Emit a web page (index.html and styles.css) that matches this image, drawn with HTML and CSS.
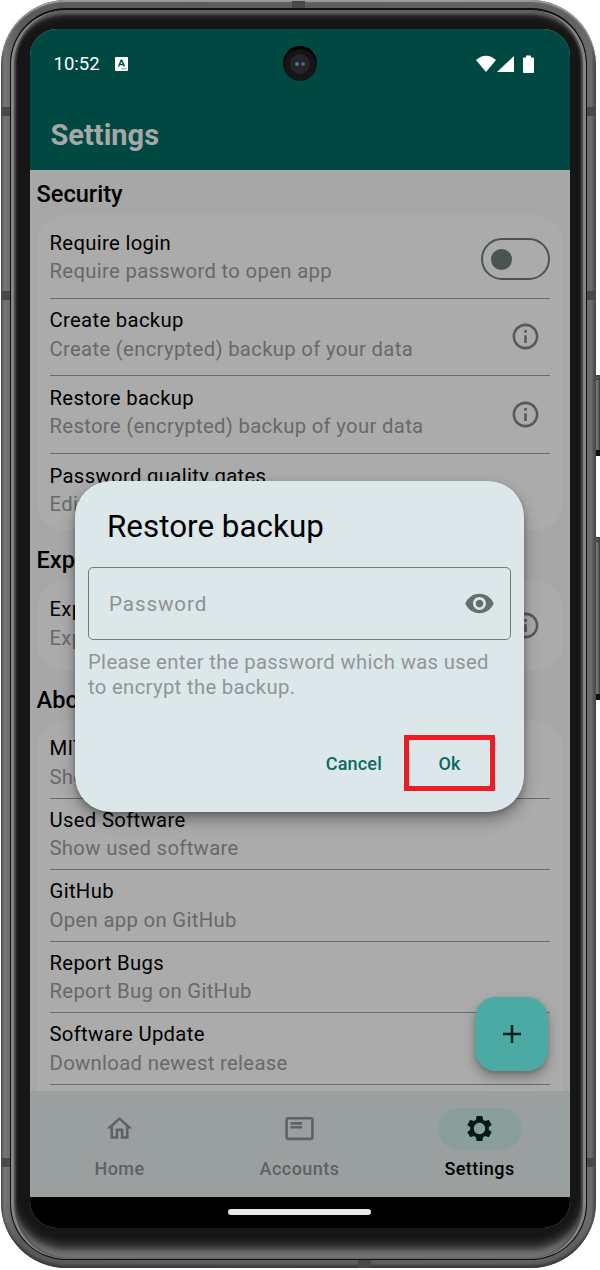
FILE: index.html
```html
<!DOCTYPE html>
<html lang="en">
<head>
<meta charset="utf-8">
<title>Settings</title>
<link rel="stylesheet" href="styles.css">
</head>
<body>
<svg class="defs" width="0" height="0" aria-hidden="true">
  <symbol id="info" viewBox="0 0 24 24"><path d="M11 7h2v2h-2zm0 4h2v6h-2zm1-9C6.48 2 2 6.48 2 12s4.48 10 10 10 10-4.48 10-10S17.52 2 12 2zm0 18c-4.41 0-8-3.59-8-8s3.59-8 8-8 8 3.59 8 8-3.59 8-8 8z"/></symbol>
</svg>
<div class="device">
  <i class="key key-power"></i>
  <i class="key key-volume"></i>
  <div class="metal">
    <i class="band band-left band-a"></i><i class="band band-left band-b"></i><i class="band band-left band-c"></i>
    <i class="band band-right band-a"></i><i class="band band-right band-b"></i><i class="band band-right band-c"></i>
    <i class="band band-top"></i><i class="band band-bottom"></i>
    <div class="bezel">
      <div class="screen">
        <header class="appbar">
          <div class="status">
            <span class="clock">10:52</span>
            <svg class="notif" viewBox="0 0 13 14"><rect width="13" height="14" rx="1" fill="#fff"/><path d="M3.6 9.4 6.2 3.2h.6l2.6 6.2M4.7 7.5h3.6" fill="none" stroke="#004943" stroke-width="1.4"/><path d="M6.5 11.8h1m1 0h1m1 0h1" stroke="#004943"/></svg>
            <span class="spacer"></span>
            <svg class="signals" viewBox="0 0 58 18"><path d="M0 5Q10-3.500 20 5L10 17zM21 17 38 1V17zM47 3.500Q47 2.500 48 2.500H50V.500H55V2.500H57Q58 2.500 58 3.500V17Q58 18 57 18H48Q47 18 47 17z" fill="#fff"/></svg>
          </div>
          <h1 class="title">Settings</h1>
        </header>
        <main class="content">
          <h2 class="section">Security</h2>
          <section class="card card-security">
            <div class="row"><div class="text"><b>Require login</b><span>Require password to open app</span></div><div class="switch"><i></i></div></div>
            <div class="row"><div class="text"><b>Create backup</b><span>Create (encrypted) backup of your data</span></div><svg class="info"><use href="#info"/></svg></div>
            <div class="row"><div class="text"><b>Restore backup</b><span>Restore (encrypted) backup of your data</span></div><svg class="info"><use href="#info"/></svg></div>
            <div class="row"><div class="text"><b>Password quality gates</b><span>Edit</span></div></div>
          </section>
          <h2 class="section">Export</h2>
          <section class="card card-export">
            <div class="row"><div class="text"><b>Export</b><span>Export</span></div><svg class="info"><use href="#info"/></svg></div>
          </section>
          <h2 class="section">About</h2>
          <section class="card card-about">
            <div class="row"><div class="text"><b>MIT</b><span>Show</span></div></div>
            <div class="row"><div class="text"><b>Used Software</b><span>Show used software</span></div></div>
            <div class="row"><div class="text"><b>GitHub</b><span>Open app on GitHub</span></div></div>
            <div class="row"><div class="text"><b>Report Bugs</b><span>Report Bug on GitHub</span></div></div>
            <div class="row"><div class="text"><b>Software Update</b><span>Download newest release</span></div></div>
          </section>
        </main>
        <nav class="nav">
          <div class="tab"><div class="pill"><svg viewBox="0 0 24 24"><path d="M12 5.690l5 4.500V18h-2v-6H9v6H7v-7.810l5-4.500M12 3L2 12h3v8h6v-6h2v6h6v-8h3L12 3z"/></svg></div><span>Home</span></div>
          <div class="tab"><div class="pill"><svg viewBox="0 0 24 24"><path d="M21 3H3c-1.100 0-2 .9-2 2v14c0 1.100.9 2 2 2h18c1.100 0 2-.9 2-2V5c0-1.100-.9-2-2-2zm0 16H3V5h18zM5 10h9v2H5zM5 7h9v2H5z"/></svg></div><span>Accounts</span></div>
          <div class="tab active"><div class="pill"><svg viewBox="0 0 24 24"><path d="M19.140 12.940c.04-.3.060-.61.060-.94 0-.32-.02-.64-.07-.94l2.030-1.580c.18-.14.230-.41.120-.61l-1.920-3.320c-.12-.22-.37-.29-.59-.22l-2.390.96c-.5-.38-1.030-.7-1.620-.94l-.36-2.540c-.04-.24-.24-.41-.48-.41h-3.840c-.24 0-.43.170-.47.410l-.36 2.540c-.59.240-1.130.570-1.620.940l-2.390-.96c-.22-.08-.47 0-.59.220L2.740 8.870c-.12.210-.08.470.120.610l2.030 1.580c-.05.3-.09.630-.09.940s.02.640.070.940l-2.030 1.580c-.18.140-.23.410-.12.610l1.920 3.320c.12.220.37.290.59.220l2.390-.96c.5.380 1.030.7 1.620.940l.36 2.540c.05.240.24.410.48.410h3.840c.24 0 .44-.17.470-.41l.36-2.540c.59-.24 1.130-.56 1.620-.94l2.390.96c.22.080.47 0 .59-.22l1.920-3.320c.12-.22.070-.47-.12-.61l-2.010-1.580zM12 16.400c-2.430 0-4.400-1.970-4.400-4.400s1.970-4.400 4.400-4.400 4.400 1.970 4.400 4.400-1.970 4.400-4.400 4.400z"/></svg></div><span>Settings</span></div>
        </nav>
        <div class="gesture"><i></i></div>

        <div class="camera"><i></i></div>
        <div class="fab"><svg viewBox="0 0 20 20"><path d="M10 1v18M1 10h18" stroke="#00201d" stroke-width="2.500"/></svg></div>
        <div class="dialog">
          <h3>Restore backup</h3>
          <div class="field"><span>Password</span><svg viewBox="0 0 24 24"><path d="M12 4.500C7 4.500 2.730 7.610 1 12c1.730 4.390 6 7.500 11 7.500s9.270-3.110 11-7.500c-1.730-4.390-6-7.500-11-7.500zM12 17c-2.760 0-5-2.240-5-5s2.240-5 5-5 5 2.240 5 5-2.240 5-5 5zm0-8c-1.660 0-3 1.340-3 3s1.340 3 3 3 3-1.340 3-3-1.340-3-3-3z"/></svg></div>
          <p>Please enter the password which was used<br>to encrypt the backup.</p>
          <div class="actions"><span class="cancel">Cancel</span><span class="ok">Ok</span></div>
        </div>
      </div>
    </div>
  </div>
</div>
</body>
</html>
```

FILE: styles.css
```css
* { box-sizing: border-box; }
body { margin: 0; background: #fff; font-family: Roboto, sans-serif; color: #000; }
h1, h2, h3, p { margin: 0; }
.defs { display: block; }

/* phone hardware */
.device { position: relative; width: 600px; height: 1270px; padding: 0 4px 2px 1px; }
.key { position: absolute; right: 0; width: 6px; background: linear-gradient(90deg, #888, #6a6a6a 70%, #333); border-top: 5px double #444; border-bottom: 6px solid #111; }
.key-power { top: 375px; height: 81px; }
.key-volume { top: 537px; height: 163px; }
.metal {
  position: relative; height: 1268px; padding: 8px 9px 8px 9px; border-radius: 65px;
  background: linear-gradient(90deg, #4c4c4c, #777 3px, #6c6c6c 8px, #5a5a5a 20px, #626262 575px, #6d6d6d 590px, #454545);
  box-shadow: inset 0 2px 1px #9a9d9a, inset 0 -3px 3px #3a3a3a;
}
.bezel {
  position: relative; height: 1252px; padding: 19px 15.500px 31px 18.500px;
  border: 1px solid #111; border-top-width: 2px; border-radius: 56px;
  background: #161616;
  box-shadow: inset 3px 0 1px #858585, inset -3px 0 1px #858585, inset 5px 0 2px #4a4a4a, inset -5px 0 2px #4a4a4a, inset 0 4px 3px #666, inset 0 7px 5px #333, inset 0 -8px 5px #737373, inset 0 -14px 9px #4c4c4c;
}
.band { position: absolute; width: 9px; height: 9px; background: #484a4a; }
.band-left { left: 0; }
.band-right { right: 0; }
.band-a { top: 107px; }
.band-b { top: 291px; }
.band-c { top: 1158px; }
.band-top { top: 1px; left: 291px; width: 13px; height: 7px; }
.band-bottom { bottom: 0; left: 357px; width: 13px; height: 8px; }

.screen { position: relative; height: 1199px; width: 540px; border-radius: 27px; overflow: hidden; background: #a7a7a7; display: flex; flex-direction: column; }

/* app bar */
.appbar { height: 141px; flex: none; background: #004943; padding: 21px 36px 0 24px; }
.status { display: flex; align-items: center; height: 28px; color: #fff; }
.clock { font-size: 18.500px; }
.notif { width: 13px; height: 14px; margin-left: 15px; }
.spacer { flex: 1; }
.signals { width: 58px; height: 18px; }
.title { margin: 40px 0 0 -3px; font-size: 29px; line-height: 34px; font-weight: 700; color: #a7a7a7; }

/* settings list */
.content { height: 921px; flex: none; overflow: hidden; padding: 0 7px; }
.section { height: 45px; padding-top: 9px; font-size: 23.600px; line-height: 30px; font-weight: 500; }
.card { background: #ababab; border-radius: 27px; padding: 6px 13px 0; }
.card-security { height: 315px; }
.card-export { height: 89px; }
.section:nth-of-type(2) { height: 51px; padding-top: 15px; }
.section:nth-of-type(3) { height: 51px; padding-top: 15px; }
.row { display: flex; align-items: center; justify-content: space-between; height: 77.500px; border-bottom: 1.300px solid #6b6b6b; }
.row:last-child { border-bottom: 0; }
.text { display: flex; flex-direction: column; white-space: nowrap; font-size: 20.300px; line-height: 28.500px; letter-spacing: .32px; margin-bottom: 4px; }
.text b { font-weight: 400; }
.text span { color: #68696a; }
.card-about { height: 400px; }
.card-about .text { margin: 1px 0 0; }
.card-about .row, .card-about .row:last-child { height: 71.500px; border-bottom: 1.300px solid #6b6b6b; }
.info { width: 31px; height: 31px; margin-right: 9px; fill: #58595a; }
.info use { width: 31px; height: 31px; }
.switch { width: 68.500px; height: 42px; border: 2.600px solid #4a5452; border-radius: 21px; display: flex; align-items: center; padding-left: 8px; }
.switch i { width: 21px; height: 21px; border-radius: 50%; background: #4a5452; }

/* bottom navigation */
.nav { height: 106px; flex: none; background: #9aa0a0; display: grid; grid-template-columns: repeat(3, 1fr); padding-top: 17px; }
.tab { display: flex; flex-direction: column; align-items: center; font-size: 18px; line-height: 22px; font-weight: 500; letter-spacing: .45px; color: #606164; }
.pill { width: 84px; height: 42px; margin-bottom: 8px; border-radius: 21px; display: flex; align-items: center; justify-content: center; }
.pill svg { width: 31px; height: 31px; margin-bottom: 2px; fill: #606164; }
.active { color: #000; }
.active .pill { background: #8a9e9b; }
.active .pill svg { fill: #001a17; }
.gesture { flex: 1; background: #000; display: flex; justify-content: center; padding-top: 12px; }
.gesture i { width: 143px; height: 6px; border-radius: 3px; background: #e8e8e8; }

/* floating layers */
.camera { position: absolute; left: 253px; top: 17px; width: 34px; height: 35px; border-radius: 50%; background: #151515; box-shadow: inset 0 3px 1px #000; display: flex; align-items: center; justify-content: center; }
.camera i { width: 20px; height: 20px; border-radius: 50%; background: radial-gradient(circle at 7px 10px, #4e8588 0 1px, transparent 2.500px), radial-gradient(circle at 13px 10px, #5969a5 0 1px, transparent 2.500px), #252528; }
.fab { position: absolute; left: 445.500px; top: 968px; width: 73px; height: 74px; border-radius: 21px; background: #4caaa5; box-shadow: 0 6px 12px rgba(0,0,0,.3), 0 2px 4px rgba(0,0,0,.12); display: flex; align-items: center; justify-content: center; }
.fab svg { width: 20px; height: 20px; }
.dialog { position: absolute; left: 45.500px; top: 452px; width: 449px; height: 331px; border-radius: 36px; background: #dce7e9; padding: 26px 13px 0; box-shadow: 0 8px 15px rgba(0,0,0,.33), 0 2px 5px rgba(0,0,0,.2); }
.dialog h3 { padding-left: 19px; font-size: 31.400px; line-height: 40px; font-weight: 400; }
.field { margin-top: 20px; height: 73px; border: 1.500px solid #707d7a; border-radius: 5px; display: flex; align-items: center; justify-content: space-between; padding: 0 15px 0 20px; font-size: 20.600px; letter-spacing: .9px; color: #8f9194; }
.field svg { width: 31px; height: 31px; fill: #65706e; }
.dialog p { margin-top: 10px; font-size: 20.300px; line-height: 24.500px; letter-spacing: .33px; color: #929598; white-space: nowrap; }
.actions { display: flex; justify-content: flex-end; align-items: center; margin-top: 36px; padding-right: 16px; gap: 22px; font-size: 18px; font-weight: 500; letter-spacing: .2px; color: #0b6a64; }
.ok { width: 91px; height: 56px; border: 5px solid #ed1c24; display: flex; align-items: center; justify-content: center; }
```
